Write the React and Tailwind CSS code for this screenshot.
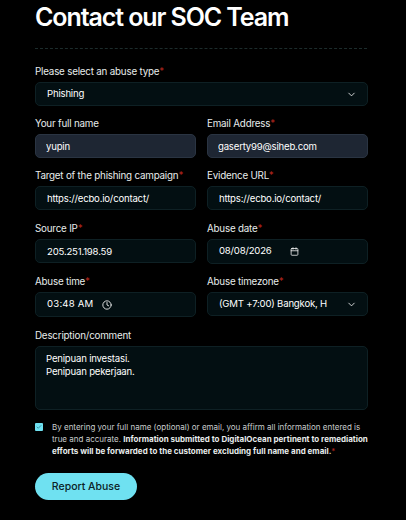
import { ChevronDown, Clock, Calendar, Check } from "lucide-react";

const labelClass = "block text-[9.8px] tracking-[-0.2px] leading-[14px] mb-[3px] text-[#e8ecec]";
const boxClass = "w-full h-[24px] px-[11px] rounded-[5px] border border-[#0e2024] bg-[#030f12] text-[9.6px] tracking-[-0.2px] text-white flex items-center outline-none";
const filledClass = "w-full h-[24px] px-[10px] rounded-[5px] border border-[#2a3442] bg-[#1e2633] text-[9.6px] tracking-[-0.2px] text-white flex items-center outline-none";

const Label = ({ children, required }) => (
  <label className={labelClass}>
    {children}
    {required && <span className="text-[#b3261e]">*</span>}
  </label>
);

const Field = ({ label, required, value, filled }) => (
  <div>
    <Label required={required}>{label}</Label>
    <input readOnly value={value} className={filled ? filledClass : boxClass} />
  </div>
);

export default function App() {
  return (
    <div className="w-[406px] h-[520px] overflow-hidden bg-black pl-[35px] pr-[38px] font-['Inter',sans-serif]">
      {/* Heading */}
      <h1 className="text-[25px] leading-[34px] font-semibold tracking-[-1.1px] text-white whitespace-nowrap">
        Contact our SOC Team
      </h1>
      <div className="mt-[14px] mb-[16px] border-t border-dashed border-[#1c2c2c] w-[332px]" />

      <div className="flex flex-col">
        <div className="mb-[11px]">
          <Label required>Please select an abuse type</Label>
          <div className={boxClass + " justify-between"}>
            <span>Phishing</span>
            <ChevronDown size={11} strokeWidth={1.75} className="-mr-[1px]" />
          </div>
        </div>

        <div className="grid grid-cols-2 gap-x-[11px] mb-[11px]">
          <Field label="Your full name" value="yupin" filled />
          <Field label="Email Address" required value="gaserty99@siheb.com" filled />
        </div>

        <div className="grid grid-cols-2 gap-x-[11px] mb-[12px]">
          <Field label="Target of the phishing campaign" required value="https://ecbo.io/contact/" />
          <Field label="Evidence URL" required value="https://ecbo.io/contact/" />
        </div>

        <div className="grid grid-cols-2 gap-x-[11px] mb-[11px]">
          <Field label="Source IP" required value="205.251.198.59" />
          <div>
            <Label required>Abuse date</Label>
            <div className={boxClass + " gap-[18px] h-[25px]"}>
              <span>08/08/2026</span>
              <Calendar size={9} strokeWidth={2} />
            </div>
          </div>
        </div>

        <div className="grid grid-cols-2 gap-x-[11px] mb-[12px]">
          <div>
            <Label required>Abuse time</Label>
            <div className={boxClass + " gap-[9px] h-[25px]"}>
              <span className="tracking-[0.2px]">03:48 AM</span>
              <Clock size={10} strokeWidth={2} />
            </div>
          </div>
          <div>
            <Label required>Abuse timezone</Label>
            <div className={boxClass + " justify-between"}>
              <span>(GMT +7:00) Bangkok, H</span>
              <ChevronDown size={11} strokeWidth={1.75} className="-mr-[1px]" />
            </div>
          </div>
        </div>

        <div className="mb-[11px]">
          <Label>Description/comment</Label>
          <textarea
            readOnly
            value={"Penipuan investasi.\nPenipuan pekerjaan."}
            className="block w-full h-[64px] px-[10px] pt-[5px] rounded-[5px] border border-[#0e2024] bg-[#030f12] text-[9.6px] tracking-[-0.2px] leading-[13px] text-white resize-none outline-none"
          />
        </div>

        <div className="flex gap-[9px] mb-[16px]">
          <div className="mt-[2px] w-[8px] h-[8px] shrink-0 rounded-[1px] bg-[#6fe1f1] flex items-center justify-center">
            <Check size={6} strokeWidth={3} className="text-[#2a7f8c]" />
          </div>
          <p className="text-[8px] leading-[12px] text-[#c9cdcd]">
            By entering your full name (optional) or email, you affirm all information entered is true and accurate.{" "}
            <span className="font-bold text-[#e8ecec]">
              Information submitted to DigitalOcean pertinent to remediation efforts will be forwarded to the customer excluding full name and email.
            </span>
            <span className="text-[#b3261e]">*</span>
          </p>
        </div>

        <button className="w-[102px] h-[27px] rounded-full bg-[#6fe1f1] text-[#0b2226] text-[10.5px] font-medium">
          Report Abuse
        </button>
      </div>
    </div>
  );
}
